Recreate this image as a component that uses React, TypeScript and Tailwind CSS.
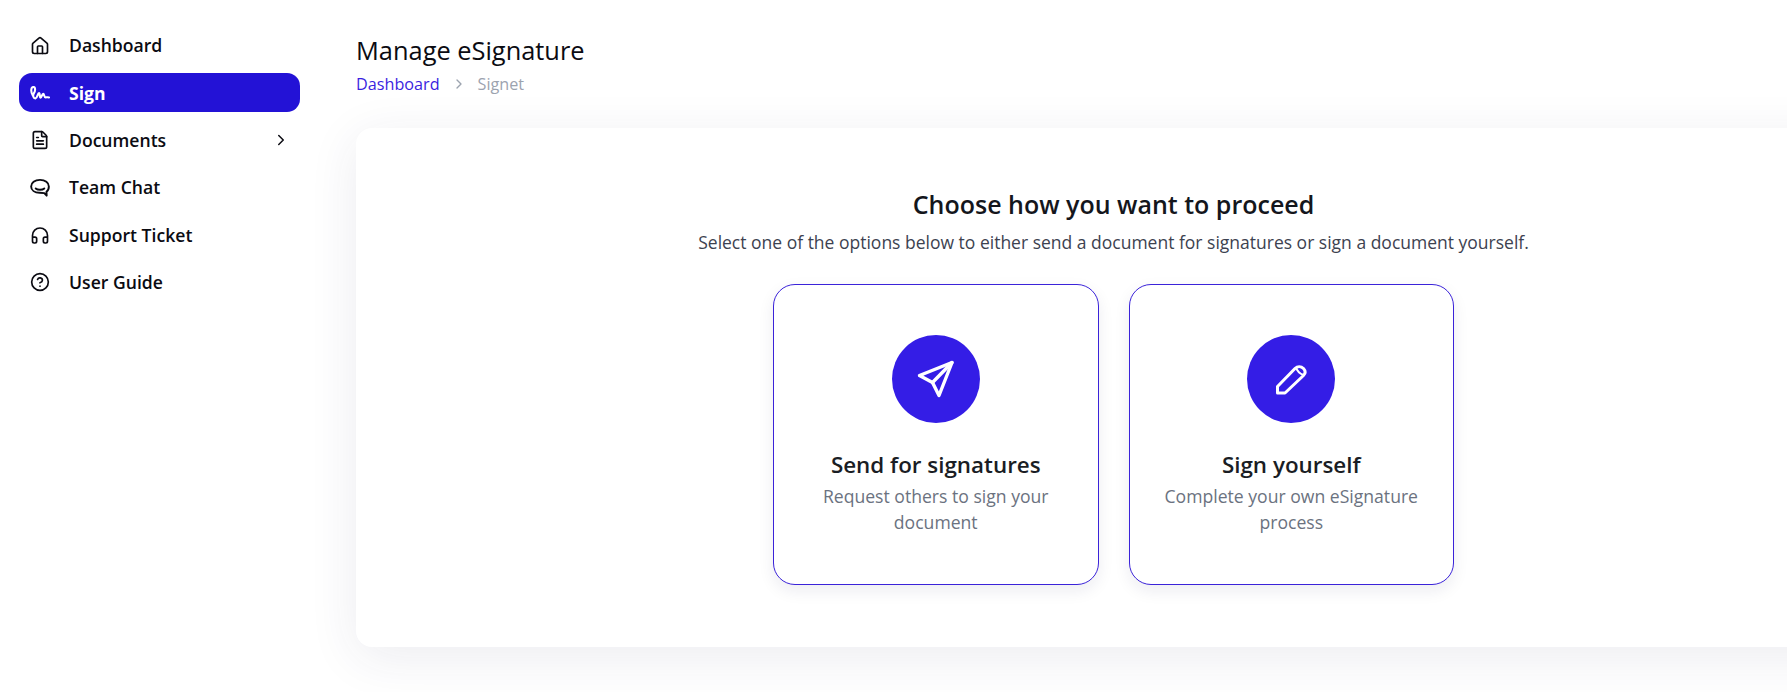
import { ChevronRight, CircleHelp, FileText, Headphones, House } from "lucide-react";
import type { ReactNode } from "react";

const font = { fontFamily: '"Open Sans", sans-serif' };

function SignatureIcon() {
  return (
    <svg width="20" height="14" viewBox="0 0 20 14" fill="none" stroke="currentColor" strokeWidth="2.1" strokeLinecap="round" strokeLinejoin="round">
      <path d="M2.8 9.5 C0.6 6 0.8 1.2 3.2 1 C5.6 0.8 5.6 4.6 3.8 7.4 C2.6 9.6 3.3 12.6 5.5 12.4 C7.4 12.2 7.6 7 9 7 C10.2 7 9.4 11.6 10.6 11.6 C11.8 11.6 12 7.8 13.2 7.8 C14.4 7.8 14 11.4 15.6 11.4 C16.8 11.4 17.6 11 19 11.4" />
    </svg>
  );
}

function ChatIcon() {
  return (
    <svg width="21" height="20" viewBox="0 0 21 20" fill="none" stroke="currentColor" strokeWidth="2" strokeLinecap="round" strokeLinejoin="round">
      <path d="M10.5 1.5 C5 1.5 1.2 4.5 1.2 8.5 C1.2 12.5 5 15 10 15 C12 15 14 15 15 15.3 L17.5 18 L17.3 14 C19 12.8 19.8 10.8 19.8 8.5 C19.8 4.5 16 1.5 10.5 1.5 Z" />
      <path d="M6 10.5 C8 12.3 13 12.3 15 10.5" />
    </svg>
  );
}

function PlaneIcon() {
  return (
    <svg width="40" height="40" viewBox="0 0 40 40" fill="none" stroke="white" strokeWidth="3.4" strokeLinecap="round" strokeLinejoin="round">
      <path d="M36 3.5 L3.5 16.5 L16.5 23.5 L23 36.5 Z" />
      <path d="M36 3.5 L16.5 23.5" />
    </svg>
  );
}

function PencilIcon() {
  return (
    <svg width="32" height="32" viewBox="0 0 32 32" fill="none" stroke="white" strokeWidth="3" strokeLinejoin="round">
      <path d="M2.5 23.5 L20 5.5 C22.5 3 26 3 28.5 5.5 C30.5 7.8 30.5 10.5 28.5 12.5 L10 30 L2.5 30 Z" />
      <path d="M21 4.5 C22 8 24.5 10.5 28.5 12" strokeWidth="2" />
    </svg>
  );
}

function NavItem({ icon, label, active, chevron }: { icon: ReactNode; label: string; active?: boolean; chevron?: boolean }) {
  return (
    <div
      className={`flex h-[39px] items-center rounded-[13px] pl-[11px] pr-[10px] ${
        active ? "bg-[#2312d6] text-white" : "text-[#0b0b12]"
      }`}
    >
      <span className="flex w-[20px] items-center justify-center">{icon}</span>
      <span className={`ml-[19px] flex-1 text-[17.6px] ${active ? "font-bold" : "font-semibold"}`}>{label}</span>
      {chevron && <ChevronRight size={18} strokeWidth={2} />}
    </div>
  );
}

function OptionCard({ icon, title, text }: { icon: ReactNode; title: string; text: string }) {
  return (
    <div className="flex h-[301px] w-[325.5px] flex-col items-center rounded-[22px] border border-[#3b23d9] bg-white px-[30px] pt-[50px] shadow-[0_6px_16px_rgba(30,30,80,0.08)]">
      <div className="flex h-[88px] w-[88px] items-center justify-center rounded-full bg-[#341de6]">{icon}</div>
      <div className="mt-[25px] text-center text-[22.4px] leading-[34px] font-semibold text-[#1a1d24]">{title}</div>
      <div className="mt-[1px] text-center text-[17.6px] leading-[26px] text-[#6b7280]">{text}</div>
    </div>
  );
}

export default function App() {
  return (
    <div className="flex h-[692px] w-full overflow-hidden bg-white" style={font}>
      <aside className="flex w-[356px] shrink-0 flex-col gap-[8.4px] pt-[26px] pr-[56px] pl-[19px]">
        <NavItem icon={<House size={22} strokeWidth={2} />} label="Dashboard" />
        <NavItem icon={<SignatureIcon />} label="Sign" active />
        <NavItem icon={<FileText size={22} strokeWidth={2} />} label="Documents" chevron />
        <NavItem icon={<ChatIcon />} label="Team Chat" />
        <NavItem icon={<Headphones size={21} strokeWidth={2} />} label="Support Ticket" />
        <NavItem icon={<CircleHelp size={22} strokeWidth={2} />} label="User Guide" />
      </aside>
      <main className="min-w-0 flex-1 pt-[32px]">
        <h1 className="text-[25.4px] leading-[36px] font-medium text-[#0b0b12]">Manage eSignature</h1>
        <div className="mt-[4px] flex items-center text-[16.2px] leading-[24px]">
          <span className="text-[#3a1fe0]">Dashboard</span>
          <ChevronRight size={16} strokeWidth={2} className="mx-[11px] text-[#9ca3af]" />
          <span className="text-[#9ca3af]">Signet</span>
        </div>
        <section className="mt-[32px] flex h-[519px] w-[1515px] flex-col items-center rounded-[16px] bg-white pt-[58px] shadow-[0_10px_50px_rgba(40,40,90,0.09)]">
          <h2 className="text-[25px] leading-[36px] font-semibold text-[#14161c]">Choose how you want to proceed</h2>
          <p className="mt-[7px] text-[17.5px] leading-[26px] text-[#3d4250]">
            Select one of the options below to either send a document for signatures or sign a document yourself.
          </p>
          <div className="mt-[29px] flex gap-[30px]">
            <OptionCard icon={<PlaneIcon />} title="Send for signatures" text="Request others to sign your document" />
            <OptionCard icon={<PencilIcon />} title="Sign yourself" text="Complete your own eSignature process" />
          </div>
        </section>
      </main>
    </div>
  );
}
